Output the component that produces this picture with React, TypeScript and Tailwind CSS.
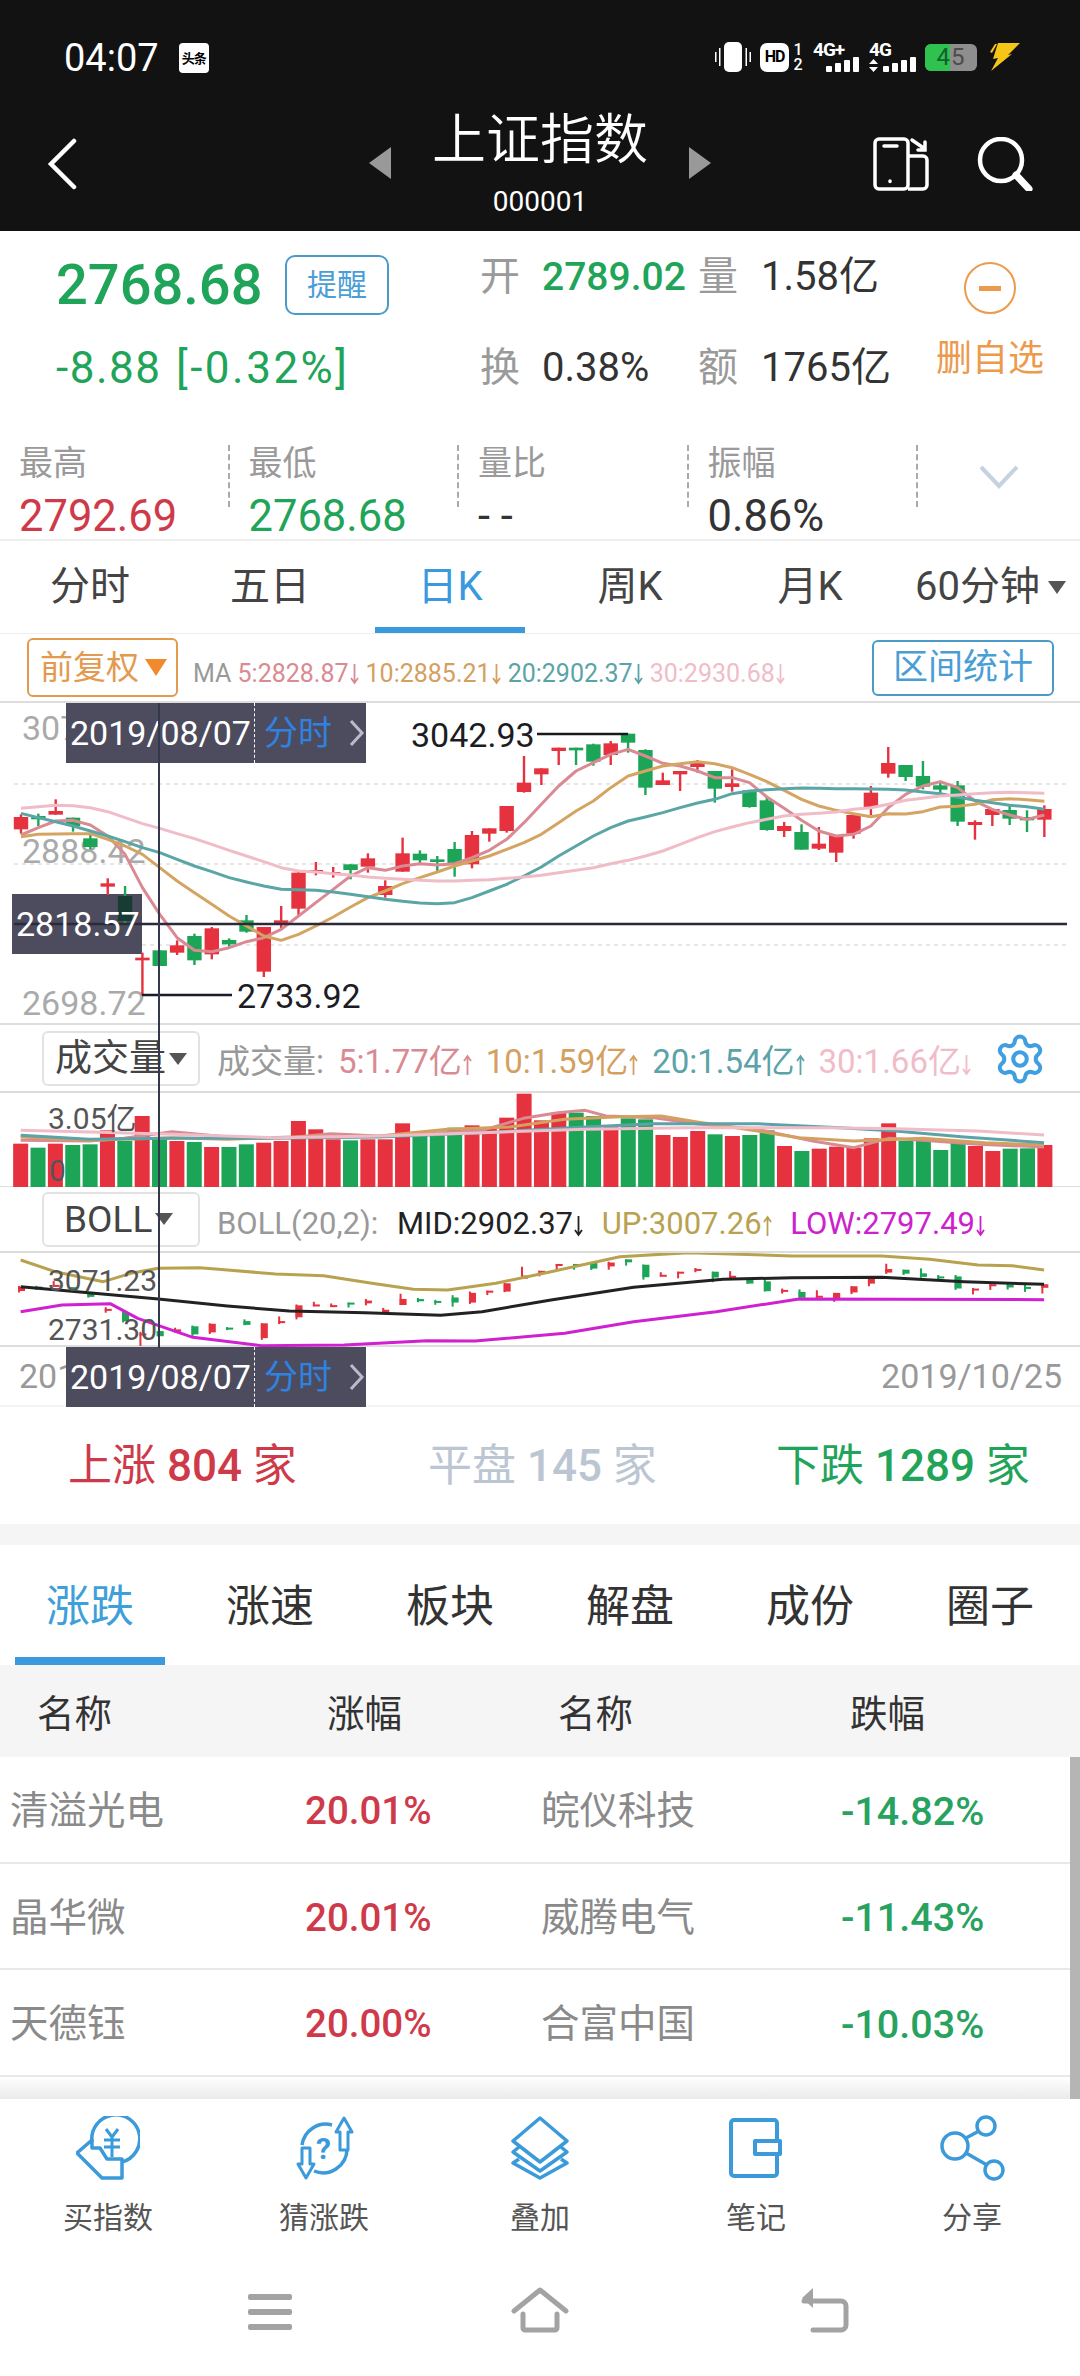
import React from 'react';
import { Settings } from 'lucide-react';

const RED = '#e5323e';
const GREEN = '#1ca557';

// candles: wick top, body top, body bottom, wick bottom, 1 = red. y values are in 3x crop units from y=690
const CANDLES: number[][] = [
  [370, 378, 415, 428, 1], [368, 375, 385, 405, 0], [325, 360, 371, 371, 1], [380, 380, 405, 422, 0], [432, 442, 468, 475, 0],
  [562, 577, 587, 612, 1], [585, 615, 690, 700, 0], [785, 800, 808, 913, 1], [778, 778, 825, 825, 0], [748, 763, 785, 792, 1],
  [728, 735, 808, 822, 0], [708, 712, 790, 805, 1], [742, 747, 760, 770, 0], [672, 688, 722, 725, 0], [708, 708, 842, 858, 1],
  [645, 688, 698, 715, 1], [537, 545, 653, 672, 1], [513, 537, 543, 553, 1], [528, 543, 547, 560, 1], [520, 520, 537, 565, 0],
  [487, 502, 527, 545, 1], [568, 585, 612, 620, 1], [440, 487, 542, 542, 1], [478, 488, 508, 517, 0], [495, 505, 513, 540, 0],
  [453, 474, 520, 557, 0], [420, 432, 520, 532, 1], [412, 412, 428, 452, 1], [345, 345, 420, 425, 1], [195, 275, 303, 305, 1],
  [232, 232, 250, 282, 1], [170, 170, 180, 222, 1], [170, 170, 178, 222, 0], [158, 160, 212, 224, 0], [150, 157, 192, 222, 1],
  [128, 128, 155, 185, 0], [175, 177, 290, 312, 0], [245, 268, 282, 282, 1], [240, 240, 250, 300, 1], [207, 215, 228, 245, 1],
  [240, 240, 293, 335, 0], [235, 277, 288, 302, 1], [298, 298, 348, 350, 0], [315, 328, 417, 419, 0], [393, 405, 420, 438, 1],
  [400, 423, 476, 476, 0], [408, 458, 473, 477, 1], [432, 432, 485, 513, 1], [372, 372, 428, 443, 1], [285, 305, 348, 372, 1],
  [168, 216, 248, 260, 1], [222, 222, 258, 270, 0], [210, 255, 287, 295, 0], [270, 283, 296, 306, 0], [270, 283, 392, 405, 0],
  [388, 393, 402, 446, 1], [354, 354, 372, 405, 1], [340, 357, 383, 402, 0], [358, 378, 388, 423, 0], [343, 354, 386, 438, 1],
];

const MA5 = [432, 410, 390, 388, 402, 435, 490, 590, 670, 740, 778, 782, 770, 752, 740, 715, 675, 635, 595, 555, 530, 538, 525, 518, 522, 518, 500, 478, 445, 395, 340, 285, 240, 215, 190, 175, 195, 217, 225, 240, 260, 260, 275, 318, 352, 388, 420, 435, 430, 405, 350, 310, 285, 272, 290, 330, 355, 372, 385, 372];
const MA10 = [437, 430, 429, 428, 428, 445, 465, 490, 530, 570, 605, 640, 675, 705, 735, 748, 730, 705, 678, 648, 620, 600, 578, 560, 543, 525, 510, 495, 475, 455, 430, 395, 360, 330, 290, 255, 240, 225, 218, 212, 218, 230, 250, 272, 298, 325, 345, 358, 368, 377, 368, 369, 362, 348, 346, 340, 326, 323, 326, 331];
const MA20 = [367, 380, 392, 405, 420, 435, 452, 470, 485, 505, 525, 542, 560, 573, 585, 595, 596, 598, 603, 610, 617, 625, 631, 636, 638, 635, 620, 600, 580, 555, 528, 495, 465, 435, 410, 390, 378, 365, 350, 336, 325, 308, 300, 296, 293, 291, 292, 293, 293, 294, 295, 297, 303, 308, 318, 328, 335, 343, 347, 355];
const MA30 = [352, 347, 343, 344, 350, 362, 380, 398, 412, 428, 443, 460, 478, 495, 512, 530, 540, 543, 548, 552, 558, 562, 565, 568, 570, 570, 568, 566, 562, 558, 553, 545, 538, 530, 518, 508, 495, 480, 460, 440, 422, 408, 395, 385, 375, 370, 367, 363, 355, 350, 340, 328, 322, 315, 312, 308, 305, 304, 305, 307];

// volume bars: top in 3x crop units from y=1000
const BARS: number[][] = [
  [428, 1], [440, 0], [428, 1], [432, 0], [430, 0], [388, 1], [420, 0], [345, 1], [412, 0], [420, 1],
  [423, 0], [438, 1], [438, 0], [430, 0], [425, 1], [420, 1], [360, 1], [385, 1], [415, 1], [418, 0],
  [415, 1], [415, 1], [367, 1], [392, 0], [392, 0], [380, 0], [373, 1], [380, 1], [350, 1], [278, 1],
  [358, 1], [335, 1], [335, 0], [345, 0], [375, 1], [352, 0], [355, 0], [402, 1], [408, 1], [390, 1],
  [400, 0], [405, 1], [402, 0], [388, 0], [435, 1], [450, 0], [443, 1], [437, 1], [440, 1], [412, 1],
  [367, 1], [420, 0], [420, 0], [447, 0], [425, 0], [435, 1], [450, 1], [443, 0], [442, 0], [432, 1],
];

const VOL_LINES: [string, number[][]][] = [
  ['#d98a92', [[30, 418], [130, 420], [180, 412], [250, 392], [300, 402], [350, 412], [430, 408], [480, 398], [550, 405], [620, 398], [700, 388], [760, 352], [810, 335], [850, 328], [880, 345], [950, 350], [1010, 368], [1100, 385], [1180, 420], [1240, 440], [1290, 412], [1340, 418], [1420, 430], [1516, 438]]],
  ['#d4a05f', [[30, 408], [130, 418], [250, 410], [330, 415], [430, 408], [550, 405], [650, 385], [740, 378], [820, 355], [900, 347], [960, 345], [1010, 362], [1100, 390], [1160, 410], [1240, 420], [1340, 412], [1430, 425], [1516, 432]]],
  ['#5ba3a8', [[30, 403], [130, 415], [250, 412], [400, 412], [550, 408], [700, 395], [850, 378], [950, 368], [1100, 368], [1220, 380], [1300, 390], [1400, 408], [1516, 425]]],
  ['#f0bcc8', [[30, 388], [130, 393], [250, 400], [400, 410], [550, 405], [700, 395], [850, 385], [1000, 380], [1200, 380], [1300, 383], [1420, 390], [1516, 402]]],
];

const BOLL_LINES: [string, number[][]][] = [
  ['#b9a24f', [[30, 780], [80, 815], [150, 845], [190, 820], [230, 805], [290, 803], [400, 822], [470, 827], [540, 850], [600, 868], [650, 870], [720, 850], [800, 815], [900, 770], [1000, 758], [1150, 768], [1280, 768], [1350, 778], [1420, 795], [1470, 797], [1516, 810]]],
  ['#222222', [[30, 860], [100, 873], [230, 897], [330, 918], [420, 933], [530, 938], [640, 946], [700, 935], [800, 900], [920, 862], [1050, 838], [1150, 833], [1280, 832], [1400, 845], [1516, 853]]],
  ['#d020d0', [[30, 935], [90, 915], [160, 911], [200, 955], [280, 1012], [380, 1037], [500, 1035], [620, 1022], [690, 1023], [820, 1000], [920, 965], [1040, 935], [1160, 897], [1300, 898], [1516, 899]]],
];

const candleX = (i: number) => 21 + 17.345 * i;
const mainY = (z: number) => 690 + z / 3;
const lowerX = (z: number) => z / 1.452;
const lowerY = (z: number) => 1000 + z / 3;
const bollFromMain = (z: number) => lowerY(778 + (z - 128) * 0.331);

// narrow trend arrow, the font's own arrows are far too wide
const Arrow = ({ up }: { up?: boolean }) => (
  <svg width="9" height="22" viewBox="0 0 9 22" className={`ml-[1px] inline-block align-[-3px] ${up ? '' : 'rotate-180'}`} fill="none" stroke="currentColor" strokeWidth="1.8">
    <path d="M4.5 21V2M1 7l3.5-5L8 7" />
  </svg>
);

const TagContent = () => (
  <div className="absolute left-[66px] top-0 z-10 flex h-[60px] w-[300px] items-center">
    <span className="ml-[4px] w-[184px] text-[34px] leading-none text-white">2019/08/07</span>
    <span className="h-full border-l border-dashed border-white" />
    <span className="ml-[9px] text-[34px] leading-none text-[#2f82e0]">分时</span>
    <svg width="16" height="28" viewBox="0 0 16 28" className="ml-[17px]" fill="none" stroke="#b9bccb" strokeWidth="3">
      <path d="M2 2l11 12L2 26" />
    </svg>
  </div>
);

const Pane = ({ top, height, children }: { top: number; height: number; children: React.ReactNode }) => (
  <svg className="absolute inset-0" width="1080" height={height} viewBox={`0 ${top} 1080 ${height}`} fill="none">
    {children}
  </svg>
);

const Signal = () => (
  <div className="flex h-[15px] items-end gap-[3px]">
    {['h-[6px]', 'h-[9px]', 'h-[12px]', 'h-[15px]'].map((h) => (
      <span key={h} className={`w-[6px] rounded-[1px] bg-white ${h}`} />
    ))}
  </div>
);

const StatusBar = () => (
  <div className="flex h-[100px] items-start justify-between pl-[64px] pr-[60px] pt-[42px] text-white">
    <div className="flex items-center gap-[20px]">
      <span className="text-[38px] leading-[32px]">04:07</span>
      <div className="flex h-[30px] w-[30px] items-center justify-center rounded-[4px] bg-white text-[13px] font-bold leading-none tracking-[-1px] text-black">头条</div>
    </div>
    <div className="flex items-center">
      <svg width="36" height="30" viewBox="0 0 36 30" fill="white" className="mr-[9px]">
        <rect x="9" y="0" width="18" height="30" rx="5" />
        <rect x="0" y="10" width="1.5" height="10" /><rect x="4" y="6" width="1.5" height="18" />
        <rect x="30.5" y="6" width="1.5" height="18" /><rect x="34.5" y="10" width="1.5" height="10" />
      </svg>
      <div className="flex h-[29px] w-[29px] items-center justify-center rounded-[7px] bg-white text-[16px] font-bold leading-none tracking-[-1px] text-black">HD</div>
      <div className="ml-[3px] flex w-[12px] flex-col items-center text-[16px] font-medium leading-[15px]"><span>1</span><span>2</span></div>
      <div className="ml-[9px] flex w-[46px] flex-col items-end">
        <span className="w-full text-[19px] font-bold leading-[15px] tracking-[-1px]">4G+</span>
        <Signal />
      </div>
      <div className="ml-[10px] flex w-[47px] flex-col">
        <span className="text-[19px] font-bold leading-[15px] tracking-[-1px]">4G</span>
        <div className="flex items-end justify-between">
          <svg width="9" height="13" viewBox="0 0 9 13" fill="white"><path d="M4.5 0L9 5H0zM4.5 13L0 8h9z" /></svg>
          <Signal />
        </div>
      </div>
      <div className="ml-[9px] flex h-[27px] w-[52px] items-center overflow-hidden rounded-[6px] bg-[#8e8e8e] text-[24px] leading-none">
        <span className="flex h-full w-[25px] items-center justify-end bg-[#2fc24f] text-[#14602b]">4</span>
        <span className="pl-[1px] text-[#4c4c4c]">5</span>
      </div>
      <svg width="32" height="28" viewBox="0 0 32 28" fill="#f5c518" className="ml-[11px]">
        <path d="M10 0h22L20 12l4-1L3 28l7-13-5 1zM2 9l5-8h2L4 10z" />
      </svg>
    </div>
  </div>
);

const Header = () => (
  <div className="h-[231px] bg-[#121212]">
    <StatusBar />
    <div className="grid h-[131px] grid-cols-[1fr_auto_1fr]">
      <div className="pl-[46px] pt-[38px]">
        <svg width="32" height="52" viewBox="0 0 32 52" fill="none" stroke="white" strokeWidth="4.5" strokeLinecap="round"><path d="M28 3L5 26l23 23" /></svg>
      </div>
      <div className="flex items-start">
        <div className="mt-[47px] h-0 w-0 border-y-[16px] border-r-[22px] border-y-transparent border-r-[#999999]" />
        <div className="mx-[41px] flex w-[216px] flex-col items-center">
          <span className="mt-[10px] text-[54px] font-[350] leading-[62px] text-white">上证指数</span>
          <span className="mt-[17px] text-[28px] leading-[26px] text-white">000001</span>
        </div>
        <div className="mt-[47px] h-0 w-0 border-y-[16px] border-l-[22px] border-y-transparent border-l-[#999999]" />
      </div>
      <div className="flex items-start justify-end gap-[48px] pr-[47px] pt-[37px]">
        <svg width="56" height="54" viewBox="0 0 56 54" fill="none" stroke="white" strokeWidth="3.5">
          <rect x="2" y="2" width="33" height="50" rx="4" />
          <path d="M35 19h15a4 4 0 0 1 4 4v25a4 4 0 0 1-4 4H35" />
          <path d="M11 9h13M17 44v.5M39 3l13 9M52 5v8h-7" strokeLinecap="round" />
        </svg>
        <svg width="56" height="54" viewBox="0 0 56 54" fill="none" stroke="white" strokeWidth="4.5">
          <circle cx="24" cy="23" r="21" />
          <path d="M39 38l13 14" strokeWidth="7" strokeLinecap="round" />
        </svg>
      </div>
    </div>
  </div>
);

const Quote = () => (
  <div className="h-[310px] bg-white">
    <div className="flex h-[214px]">
      <div className="w-[900px] pt-[14px]">
        <div className="flex h-[80px] items-center pl-[56px]">
          <div className="flex w-[424px] items-center">
            <span className="w-[229px] text-[56px] font-medium leading-none text-[#1fa45a]">2768.68</span>
            <div className="flex h-[60px] w-[104px] items-center justify-center rounded-[10px] border-2 border-[#4a9bc9] text-[30px] leading-none text-[#4a9ed6]">提醒</div>
          </div>
          <div className="flex items-center pb-[16px]">
            <span className="w-[62px] text-[40px] leading-none text-[#9a9a9a]">开</span>
            <span className="w-[156px] text-[39px] font-medium leading-none text-[#1fa45a]">2789.02</span>
            <span className="w-[63px] text-[40px] leading-none text-[#9a9a9a]">量</span>
            <span className="text-[40px] leading-none text-[#333333]">1.58亿</span>
          </div>
        </div>
        <div className="flex h-[80px] items-center pl-[56px] pt-[6px]">
          <div className="flex w-[424px] items-center text-[44px] leading-none tracking-[1.5px] text-[#1fa45a]">
            <span className="w-[120px]">-8.88</span>
            <span className="tracking-[2.5px]">[-0.32%]</span>
          </div>
          <span className="w-[62px] text-[40px] leading-none text-[#9a9a9a]">换</span>
          <span className="w-[156px] text-[40px] leading-none text-[#333333]">0.38%</span>
          <span className="w-[63px] text-[40px] leading-none text-[#9a9a9a]">额</span>
          <span className="text-[40px] leading-none text-[#333333]">1765亿</span>
        </div>
      </div>
      <div className="flex w-[180px] flex-col items-center pt-[31px]">
        <div className="flex h-[52px] w-[52px] items-center justify-center rounded-full border-2 border-[#ec9a4c]">
          <span className="h-[5px] w-[22px] bg-[#ec9a4c]" />
        </div>
        <span className="mt-[27px] text-[36px] leading-none text-[#ec9a4c]">删自选</span>
      </div>
    </div>
    <div className="flex h-[96px] border-b-2 border-[#eeeeee]">
      {[
        ['最高', '2792.69', 'text-[#cf3a4a]'],
        ['最低', '2768.68', 'text-[#1fa45a]'],
        ['量比', '- -', 'text-[#333333]'],
        ['振幅', '0.86%', 'text-[#333333]'],
      ].map(([label, value, color]) => (
        <div key={label} className="flex w-[229.5px] justify-between pl-[19px]">
          <div className="flex flex-col">
            <span className="h-[37px] text-[34px] leading-[37px] text-[#9a9a9a]">{label}</span>
            <span className={`mt-[13px] text-[43.5px] leading-[44px] ${color}`}>{value}</span>
          </div>
          <span className="h-[62px] border-l-2 border-dashed border-[#aaaaaa]" />
        </div>
      ))}
      <div className="flex flex-1 justify-center pt-[20px]">
        <svg width="40" height="24" viewBox="0 0 40 24" fill="none" stroke="#c5d3e0" strokeWidth="4"><path d="M2 2l18 19L38 2" /></svg>
      </div>
    </div>
  </div>
);

const RangeTabs = () => (
  <div className="grid h-[93px] grid-cols-6 border-b border-[#eeeeee] bg-white">
    {['分时', '五日', '日K', '周K', '月K'].map((t) => (
      <div key={t} className="flex items-center justify-center">
        <div className={`flex h-full w-[150px] items-center justify-center text-[40px] leading-none ${t === '日K' ? 'border-b-[6px] border-[#3b9ade] pt-[6px] text-[#3b9ade]' : 'text-[#444444]'}`}>{t}</div>
      </div>
    ))}
    <div className="flex items-center justify-start pl-[15px] text-[40px] leading-none text-[#444444]">
      60分钟
      <span className="ml-[8px] h-0 w-0 border-x-[9px] border-t-[13px] border-x-transparent border-t-[#555555]" />
    </div>
  </div>
);

const MainChart = () => (
  <div className="relative h-[322px] border-b-2 border-[#dddddd] text-[34px] leading-none">
    <span className="absolute left-[22px] top-[8px] text-[#aaaaaa]">3070.12</span>
    <span className="absolute left-[22px] top-[131px] text-[#aaaaaa]">2888.42</span>
    <span className="absolute left-[22px] top-[283px] text-[#aaaaaa]">2698.72</span>
    <div className="absolute left-[66px] top-0 h-[60px] w-[300px] bg-[#4d4c5e]" />
    <div className="absolute left-[12px] top-[191px] h-[60px] w-[130px] bg-[#4d4c5e]" />
    <Pane top={702} height={322}>
      {[[14, 783], [14, 863], [142, 944]].map(([x1, y]) => (
        <line key={y} x1={x1} x2="1067" y1={y} y2={y} stroke="#cfcfcf" strokeWidth="1" strokeDasharray="4 4" />
      ))}
      {CANDLES.map(([wt, bt, bb, wb, up], i) => {
        const color = up ? RED : GREEN;
        return (
          <g key={i}>
            <rect x={candleX(i) - 1.2} y={mainY(wt)} width="2.4" height={mainY(wb) - mainY(wt)} fill={color} />
            <rect x={candleX(i) - 7.2} y={mainY(bt)} width="14.4" height={Math.max(mainY(bb) - mainY(bt), 2)} fill={i === 6 ? '#183c34' : color} />
          </g>
        );
      })}
      {[['#d98a92', MA5], ['#d4a562', MA10], ['#5aa5a5', MA20], ['#f0bcc8', MA30]].map(([color, ys]) => (
        <polyline
          key={color as string}
          points={(ys as number[]).map((y, i) => `${candleX(i)},${mainY(y)}`).join(' ')}
          stroke={color as string}
          strokeWidth="3"
          strokeLinejoin="round"
        />
      ))}
      <line x1="14" x2="1067" y1="923" y2="923" stroke="#2a2a3a" strokeWidth="2.5" />
      <line x1="537" x2="628" y1="733" y2="733" stroke="#1a1a1a" strokeWidth="2.5" />
      <line x1="142" x2="232" y1="994" y2="994" stroke="#1a1a2a" strokeWidth="2.5" />
    </Pane>
    <TagContent />
    <span className="absolute left-[16px] top-[204px] text-white">2818.57</span>
    <span className="absolute left-[411px] top-[15px] text-[#1c1c24]">3042.93</span>
    <span className="absolute left-[237px] top-[276px] text-[#1c1c24]">2733.92</span>
  </div>
);

const Selector = ({ label, left }: { label: string; left: string }) => (
  <div className={`flex h-[55px] w-[158px] items-center rounded-[6px] border-2 border-[#e2e2e2] text-[37px] leading-none text-[#444444] ${left}`}>
    <span>{label}</span>
    <span className="ml-[3px] h-0 w-0 border-x-[9px] border-t-[12px] border-x-transparent border-t-[#555555]" />
  </div>
);

const VolumeChart = () => (
  <div className="relative h-[94px] border-b border-[#dddddd]">
    <Pane top={1092} height={94}>
      {BARS.map(([top, up], i) => (
        <rect key={i} x={20.66 + 17.36 * i - 7.5} y={lowerY(top)} width="15" height={1186 - lowerY(top)} fill={up ? RED : GREEN} />
      ))}
      {VOL_LINES.map(([color, pts]) => (
        <polyline key={color} points={pts.map(([x, y]) => `${lowerX(x)},${lowerY(y)}`).join(' ')} stroke={color} strokeWidth="3" strokeLinejoin="round" />
      ))}
    </Pane>
    <span className="absolute left-[48px] top-[11px] text-[30px] leading-none text-[#555555]">3.05亿</span>
    <span className="absolute left-[49px] top-[63px] text-[30px] leading-none text-[#555555]">0</span>
  </div>
);

const BollChart = () => (
  <div className="relative h-[94px] border-b-2 border-[#dddddd]">
    <Pane top={1253} height={94}>
      {CANDLES.map(([wt, bt, bb, wb, up], i) => {
        const color = up ? RED : GREEN;
        return (
          <g key={i}>
            <rect x={candleX(i) - 3} y={bollFromMain(wt)} width="2" height={bollFromMain(wb) - bollFromMain(wt)} fill={color} />
            <rect x={candleX(i) - 3} y={bollFromMain(bt)} width="7" height={Math.max(bollFromMain(bb) - bollFromMain(bt), 2)} fill={color} />
          </g>
        );
      })}
      {BOLL_LINES.map(([color, pts]) => (
        <polyline key={color} points={pts.map(([x, y]) => `${lowerX(x)},${lowerY(y)}`).join(' ')} stroke={color} strokeWidth="3" strokeLinejoin="round" />
      ))}
    </Pane>
    <span className="absolute left-[48px] top-[13px] text-[30px] leading-none text-[#555555]">3071.23</span>
    <span className="absolute left-[48px] top-[62px] text-[30px] leading-none text-[#555555]">2731.30</span>
  </div>
);

const ChartSection = () => (
  <div className="relative bg-white">
    {/* crosshair runs through all three panes */}
    <div className="absolute left-[158px] top-[69px] z-20 h-[645px] w-[2px] bg-[#33384a]" />

    <div className="flex h-[69px] items-center border-b-2 border-[#dddddd] pl-[27px] pr-[26px]">
      <div className="flex h-[59px] w-[151px] items-center rounded-[6px] border-2 border-[#e39a4f] pl-[11px] text-[33px] leading-none text-[#e39a4f]">
        前复权
        <span className="ml-[6px] h-0 w-0 border-x-[11px] border-t-[17px] border-x-transparent border-t-[#f08a2c]" />
      </div>
      <div className="ml-[15px] flex gap-[7px] pt-[12px] text-[25px] leading-none">
        <span><span className="text-[#999999]">MA </span><span className="text-[#d98a92]">5:2828.87<Arrow /></span></span>
        <span className="text-[#d4a05f]">10:2885.21<Arrow /></span>
        <span className="text-[#5ba3a8]">20:2902.37<Arrow /></span>
        <span className="text-[#f0bcc8]">30:2930.68<Arrow /></span>
      </div>
      <div className="ml-auto flex h-[56px] w-[182px] items-center justify-center rounded-[6px] border-2 border-[#4a9bc9] text-[35px] leading-none text-[#4a9ed6]">区间统计</div>
    </div>

    <MainChart />

    <div className="flex h-[66px] items-center pl-[42px] pt-[1px]">
      <Selector label="成交量" left="pl-[11px]" />
      <div className="ml-[17px] flex w-[754px] justify-between pt-[6px] text-[33px] leading-none">
        <span className="text-[#999999]">成交量:</span>
        <span className="text-[#d98a92]">5:1.77亿<Arrow up /></span>
        <span className="text-[#d4a05f]">10:1.59亿<Arrow up /></span>
        <span className="text-[#5ba3a8]">20:1.54亿<Arrow up /></span>
        <span className="text-[#f0bcc8]">30:1.66亿<Arrow /></span>
      </div>
      <Settings size={54} strokeWidth={1.8} className="ml-[22px] text-[#3f9fe0]" />
    </div>
    <div className="h-[2px] bg-[#dddddd]" />
    <VolumeChart />

    <div className="flex h-[66px] items-center border-b-2 border-[#dddddd] pl-[42px]">
      <Selector label="BOLL" left="pl-[20px]" />
      <div className="ml-[17px] flex w-[768px] justify-between pt-[8px] text-[31px] leading-none">
        <span className="text-[#999999]">BOLL(20,2):</span>
        <span className="text-[#222222]">MID:2902.37<Arrow /></span>
        <span className="text-[#b9a24f]">UP:3007.26<Arrow up /></span>
        <span className="text-[#cc22cc]">LOW:2797.49<Arrow /></span>
      </div>
    </div>
    <BollChart />

    <div className="relative flex h-[60px] items-center justify-between border-b-2 border-[#f3f3f3] pl-[19px] pr-[18px] text-[34px] leading-none text-[#999999]">
      <span>2019/06/14</span>
      <span>2019/10/25</span>
      <div className="absolute left-[66px] top-0 h-[60px] w-[300px] bg-[#4d4c5e]" />
      <TagContent />
    </div>
  </div>
);

const Breadth = () => (
  <div className="flex h-[117px] items-center bg-white text-[44px] leading-none">
    <span className="ml-[68px] w-[360px] text-[#cf3a4a]">上涨 <span className="font-medium">804</span> 家</span>
    <span className="w-[348px] text-[#bcc6d2]">平盘 <span className="font-medium">145</span> 家</span>
    <span className="text-[#1fa45a]">下跌 <span className="font-medium">1289</span> 家</span>
  </div>
);

const ListTabs = () => (
  <div className="grid h-[120px] grid-cols-6 bg-white">
    {['涨跌', '涨速', '板块', '解盘', '成份', '圈子'].map((t, i) => (
      <div key={t} className="flex items-center justify-center pt-[3px]">
        <span className={`text-[44px] leading-none ${i === 0 ? 'text-[#3f9fd8]' : 'text-[#333333]'}`}>{t}</span>
      </div>
    ))}
  </div>
);

const ROWS = [
  ['清溢光电', '20.01%', '皖仪科技', '-14.82%'],
  ['晶华微', '20.01%', '威腾电气', '-11.43%'],
  ['天德钰', '20.00%', '合富中国', '-10.03%'],
];

const RankTable = () => (
  <div className="bg-white">
    <div className="relative -mt-[8px] ml-[15px] h-[8px] w-[150px] bg-[#3b9ade]" />
    <div className="grid h-[92px] grid-cols-[290px_231px_292px_1fr] items-center bg-[#f5f5f5] pl-[37px] pt-[8px] text-[37.5px] leading-none text-[#333333]">
      <span>名称</span><span>涨幅</span><span>名称</span><span>跌幅</span>
    </div>
    <div className="relative">
      <div className="absolute right-0 top-0 z-10 h-[342px] w-[10px] bg-[#b5b5b5]" />
      {ROWS.map(([a, b, c, d]) => (
        <div key={a} className="grid h-[106.5px] grid-cols-[295px_236px_300px_1fr] items-center border-b-2 border-[#e8e8e8] pl-[10px] pt-[4px] text-[38.5px] leading-none">
          <span className="text-[#8a8a8a]">{a}</span>
          <span className="font-medium text-[#cf3a4a]">{b}</span>
          <span className="text-[#8a8a8a]">{c}</span>
          <span className="text-[39.5px] font-medium text-[#27a25f]">{d}</span>
        </div>
      ))}
      <div className="h-[22.5px] bg-gradient-to-b from-white to-[#eaeaea]" />
    </div>
  </div>
);

const BLUE = '#3b9ad9';

const TOOLS: [string, React.ReactNode][] = [
  ['买指数', (
    <svg width="64" height="64" viewBox="0 0 64 64" fill="none" stroke={BLUE} strokeWidth="3.5" strokeLinejoin="round">
      <path d="M16 26A24 24 0 1 1 46 46" />
      <path d="M1 37L16 24v8h8l7 11h15v19H26z" />
      <path d="M30 13l6 8 6-8M28 24h16M28 31h16M36 21v20" strokeWidth="3" />
    </svg>
  )],
  ['猜涨跌', (
    <svg width="64" height="64" viewBox="0 0 64 64" fill="none" stroke={BLUE} strokeWidth="3.5" strokeLinejoin="round">
      <path d="M40 9A24 24 0 0 0 10 29M22 55a24 24 0 0 0 33-22" />
      <path d="M52 2l8 14h-4v18h-8V16h-4zM14 62L6 48h4V32h8v16h4z" strokeWidth="3" />
      <text x="24" y="43" fill={BLUE} stroke="none" fontSize="30" fontWeight="700">?</text>
    </svg>
  )],
  ['叠加', (
    <svg width="58" height="64" viewBox="0 0 58 64" fill="none" stroke={BLUE} strokeWidth="3.5" strokeLinejoin="round">
      <path d="M29 2l27 23-27 21L2 25z" />
      <path d="M8 31l-6 5 27 19 27-19-6-5" />
      <path d="M8 43l-6 4 27 15 27-15-6-4" />
    </svg>
  )],
  ['笔记', (
    <svg width="54" height="60" viewBox="0 0 54 60" fill="none" stroke={BLUE} strokeWidth="4" strokeLinejoin="round">
      <rect x="2" y="2" width="46" height="56" rx="3" />
      <rect x="26" y="23" width="25" height="13" fill="white" />
    </svg>
  )],
  ['分享', (
    <svg width="66" height="66" viewBox="0 0 66 66" fill="none" stroke={BLUE} strokeWidth="3.5">
      <circle cx="16" cy="31" r="13" />
      <circle cx="47" cy="11" r="9" />
      <circle cx="55" cy="55" r="9" />
      <path d="M27 23l13-7M27 38l21 12" />
    </svg>
  )],
];

const BottomBar = () => (
  <div className="relative flex-1 bg-white">
    <div className="grid h-[150px] grid-cols-5 pt-[15px]">
      {TOOLS.map(([label, icon]) => (
        <div key={label} className="flex flex-col items-center">
          <div className="flex h-[68px] items-center justify-center">{icon}</div>
          <span className="mt-[21px] text-[30px] leading-none text-[#555555]">{label}</span>
        </div>
      ))}
    </div>
    <div className="flex items-start pl-[248px] pt-[38px]">
      <div className="mt-[7px] flex w-[44px] flex-col gap-[9px]">
        <span className="h-[6px] rounded-[2px] bg-[#a3a3a3]" />
        <span className="h-[6px] rounded-[2px] bg-[#a3a3a3]" />
        <span className="h-[6px] rounded-[2px] bg-[#a3a3a3]" />
      </div>
      <svg width="58" height="46" viewBox="0 0 58 46" fill="none" stroke="#a3a3a3" strokeWidth="5" strokeLinejoin="round" strokeLinecap="round" className="ml-[219px]">
        <path d="M3 24L29 3l26 21" />
        <path d="M12 27v14a2 2 0 0 0 2 2h30a2 2 0 0 0 2-2V27" />
      </svg>
      <svg width="48" height="46" viewBox="0 0 48 46" fill="none" className="ml-[232px]">
        <path d="M3 14h37a5 5 0 0 1 5 5v19a5 5 0 0 1-5 5H12" stroke="#a3a3a3" strokeWidth="5" strokeLinecap="round" />
        <path d="M1 11L12 1v20z" fill="#a3a3a3" />
      </svg>
    </div>
  </div>
);

export default function App() {
  return (
    <div className="flex h-[2376px] w-[1080px] flex-col overflow-hidden bg-white font-['Roboto','Noto_Sans_CJK_SC',sans-serif]">
      <Header />
      <Quote />
      <RangeTabs />
      <ChartSection />
      <Breadth />
      <div className="h-[21px] bg-[#f5f5f5]" />
      <ListTabs />
      <RankTable />
      <BottomBar />
    </div>
  );
}
